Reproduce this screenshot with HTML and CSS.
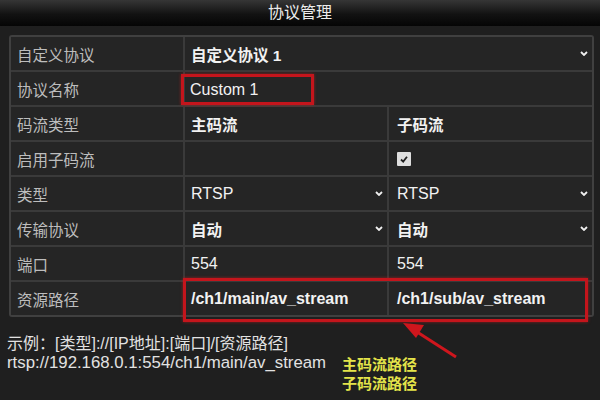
FILE: index.html
```html
<!DOCTYPE html>
<html lang="zh-CN">
<head>
  <meta charset="UTF-8" />
  <meta name="viewport" content="width=device-width, initial-scale=1.0" />
  <title>协议管理</title>
  <link rel="stylesheet" href="styles.css">
</head>
<body>
  <div class="page">
    <div class="title">协议管理</div>

    <div class="table-wrap">
      <div class="table">
        <div class="cell label">自定义协议</div>
        <div class="cell value wide select bold">自定义协议 1
          <svg class="chev" viewBox="0 0 8 5"><polyline points="1,1 4,4 7,1" /></svg>
        </div>

        <div class="cell label">协议名称</div>
        <div class="cell value wide"><span class="mark-name">Custom 1</span></div>

        <div class="cell label">码流类型</div>
        <div class="cell value bold">主码流</div>
        <div class="cell value sub bold">子码流</div>

        <div class="cell label">启用子码流</div>
        <div class="cell value"></div>
        <div class="cell value sub"><span class="check">
          <svg viewBox="0 0 14 14"><polyline points="4,7.5 6.2,9.6 10,4.8" /></svg>
        </span></div>

        <div class="cell label">类型</div>
        <div class="cell value select">RTSP
          <svg class="chev" viewBox="0 0 8 5"><polyline points="1,1 4,4 7,1" /></svg>
        </div>
        <div class="cell value sub select">RTSP
          <svg class="chev" viewBox="0 0 8 5"><polyline points="1,1 4,4 7,1" /></svg>
        </div>

        <div class="cell label">传输协议</div>
        <div class="cell value select bold">自动
          <svg class="chev" viewBox="0 0 8 5"><polyline points="1,1 4,4 7,1" /></svg>
        </div>
        <div class="cell value sub select bold">自动
          <svg class="chev" viewBox="0 0 8 5"><polyline points="1,1 4,4 7,1" /></svg>
        </div>

        <div class="cell label">端口</div>
        <div class="cell value">554</div>
        <div class="cell value sub">554</div>

        <div class="cell label">资源路径</div>
        <div class="cell value path">/ch1/main/av_stream</div>
        <div class="cell value sub path">/ch1/sub/av_stream</div>
      </div>
      <div class="mark-path"></div>
    </div>

    <div class="notes">
      <div class="example">
        <div>示例：[类型]://[IP地址]:[端口]/[资源路径]</div>
        <div class="url">rtsp://192.168.0.1:554/ch1/main/av_stream</div>
      </div>
      <div class="legend">
        <div>主码流路径</div>
        <div>子码流路径</div>
      </div>
    </div>

    <svg class="arrow" viewBox="0 0 70 50">
      <line x1="56" y1="42" x2="14" y2="15" />
      <polygon points="3,8 24,10 16,23" />
    </svg>
  </div>
</body>
</html>
```

FILE: styles.css
```css
body {
  margin: 0;
  background: #1f1f1f;
  font-family: "Liberation Sans", "Noto Sans CJK SC", sans-serif;
  color: #e6e6e6;
}
.page {
  position: relative;
  width: 600px;
  height: 400px;
  overflow: hidden;
}
.title {
  height: 26px;
  line-height: 25px;
  text-align: center;
  font-size: 16px;
  color: #ececec;
  background: linear-gradient(#363636, #121212 55%, #050505);
}
.table-wrap {
  position: relative;
  margin: 9px 6px 0 9px;
}
.table {
  display: grid;
  grid-template-columns: 172px 202px 203px;
  grid-auto-rows: 33px;
  gap: 2px;
  border: 2px solid #404040;
  border-radius: 3px;
  background: #3a3a3a;
}
.cell {
  display: flex;
  align-items: center;
  background: #252525;
  font-size: 16px;
  white-space: nowrap;
}
.label {
  padding-left: 6px;
  font-size: 15.5px;
  color: #bdbdbd;
}
.value {
  padding-left: 6px;
  color: #f2f2f2;
}
.value.sub {
  padding-left: 8px;
}
.wide {
  grid-column: span 2;
}
.bold {
  font-weight: bold;
  font-size: 15.5px;
}
.select {
  justify-content: space-between;
  padding-right: 4px;
}
.chev {
  width: 8px;
  height: 5px;
  fill: none;
  stroke: #f0f0f0;
  stroke-width: 1.8;
}
.path {
  font-weight: bold;
  font-size: 16px;
}
.mark-name {
  display: flex;
  align-items: center;
  width: 121px;
  height: 25px;
  margin: 2px 0 0 -10px;
  padding-left: 6px;
  border: 3px solid #c4151c;
  box-shadow: 0 0 3px rgba(220, 30, 30, 0.6);
  font-size: 16px;
}
.check {
  display: block;
  width: 14px;
  height: 14px;
  background: #dedede;
  border-radius: 1px;
}
.check svg {
  display: block;
  width: 14px;
  height: 14px;
  fill: none;
  stroke: #202020;
  stroke-width: 1.8;
}
.mark-path {
  position: absolute;
  left: 174px;
  top: 243px;
  width: 399px;
  height: 38px;
  border: 3px solid #c4151c;
  box-shadow: 0 0 3px rgba(220, 30, 30, 0.6);
  pointer-events: none;
}
.notes {
  display: flex;
  padding: 17px 0 0 7px;
}
.example {
  width: 335px;
  font-size: 16px;
  line-height: 19px;
  color: #e2e2e2;
}
.url {
  font-size: 16.8px;
}
.legend {
  margin-top: 21px;
  font-size: 15px;
  line-height: 19px;
  font-weight: bold;
  color: #e4e44a;
}
.arrow {
  position: absolute;
  left: 400px;
  top: 315px;
  width: 70px;
  height: 50px;
}
.arrow line {
  stroke: #cf161d;
  stroke-width: 3;
}
.arrow polygon {
  fill: #cf161d;
}
```
